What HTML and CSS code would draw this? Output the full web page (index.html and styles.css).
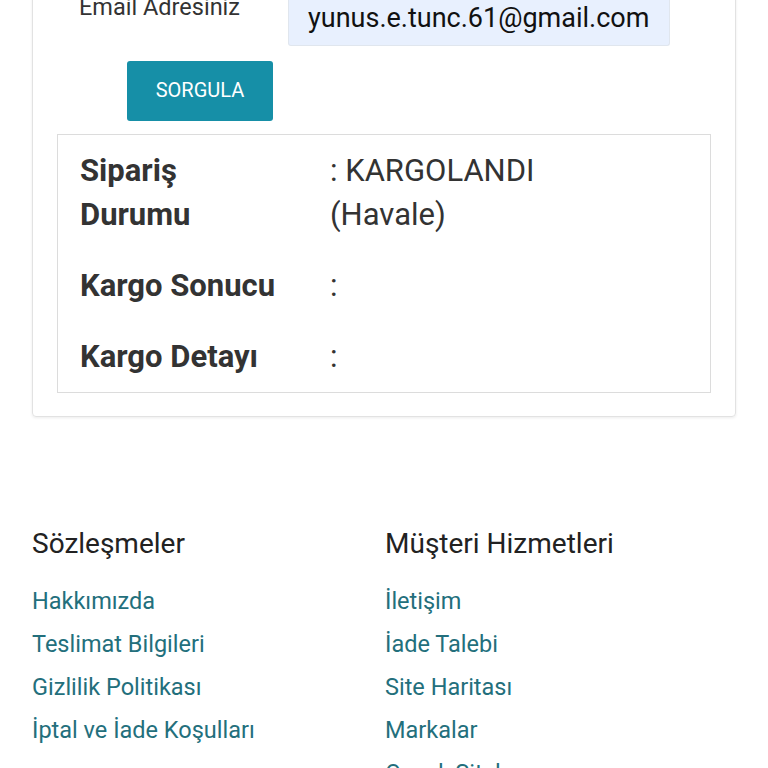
FILE: index.html
```html
<!DOCTYPE html>
<html lang="tr">
<head>
<meta charset="utf-8">
<title>Sipariş Sorgulama</title>
<link rel="stylesheet" href="styles.css">
</head>
<body>
<div class="card">
  <div class="form-row">
    <label class="form-label">Email Adresiniz</label>
    <div class="form-input">yunus.e.tunc.61@gmail.com</div>
  </div>
  <div class="btn-row">
    <button class="btn">SORGULA</button>
  </div>
  <div class="result">
    <div class="result-row">
      <div class="result-label">Sipariş Durumu</div>
      <div class="result-value">: KARGOLANDI<br>(Havale)</div>
    </div>
    <div class="result-row">
      <div class="result-label">Kargo Sonucu</div>
      <div class="result-value">:</div>
    </div>
    <div class="result-row">
      <div class="result-label">Kargo Detayı</div>
      <div class="result-value">:</div>
    </div>
  </div>
</div>
<footer class="footer">
  <div class="footer-col">
    <h3 class="footer-title">Sözleşmeler</h3>
    <ul class="footer-links">
      <li><a href="#">Hakkımızda</a></li>
      <li><a href="#">Teslimat Bilgileri</a></li>
      <li><a href="#">Gizlilik Politikası</a></li>
      <li><a href="#">İptal ve İade Koşulları</a></li>
    </ul>
  </div>
  <div class="footer-col">
    <h3 class="footer-title">Müşteri Hizmetleri</h3>
    <ul class="footer-links">
      <li><a href="#">İletişim</a></li>
      <li><a href="#">İade Talebi</a></li>
      <li><a href="#">Site Haritası</a></li>
      <li><a href="#">Markalar</a></li>
      <li><a href="#">Onaylı Siteler</a></li>
    </ul>
  </div>
</footer>
</body>
</html>
```
FILE: styles.css
```css
html, body {
  margin: 0;
  padding: 0;
  background: #fff;
  font-family: Roboto, "Noto Sans", Arial, sans-serif;
  color: #333;
  overflow: hidden;
}
.card {
  margin: -35px 32px 0;
  border: 1px solid #e2e2e2;
  border-radius: 4px;
  box-shadow: 0 1px 3px rgba(0,0,0,0.08);
  padding: 24px 24px 23px;
}
.form-row {
  display: flex;
  align-items: flex-start;
}
.form-label {
  width: 209px;
  padding-left: 22px;
  padding-top: 3px;
  font-size: 23.5px;
  color: #333;
}
.form-input {
  width: 382px;
  height: 56px;
  padding-left: 19px;
  display: flex;
  align-items: center;
  background: #e8f0fe;
  border: 1px solid #e0e6ee;
  border-top: none;
  border-radius: 0 0 3px 3px;
  font-size: 27px;
  color: #111;
  box-sizing: border-box;
}
.btn-row {
  padding: 15px 0 13px 70px;
}
.btn {
  display: block;
  width: 146px;
  height: 60px;
  border: none;
  border-radius: 3px;
  background: #168fa7;
  color: #fff;
  font-family: Roboto, Arial, sans-serif;
  font-size: 20px;
  padding: 0 0 2px;
}
.result {
  border: 1px solid #dcdcdc;
  padding: 0 22px;
}
.result-row {
  display: grid;
  grid-template-columns: 205px 1fr;
  column-gap: 45px;
  padding: 14px 0 13px;
  line-height: 44px;
  font-size: 31px;
}
.result-label {
  font-weight: 700;
  color: #333;
}
.result-value {
  color: #333;
}
.footer {
  display: grid;
  grid-template-columns: 353px 1fr;
  margin: 111px 32px 0;
}
.footer-title {
  margin: 0;
  font-size: 28px;
  line-height: 32px;
  font-weight: 400;
  color: #222;
}
.footer-links {
  list-style: none;
  margin: 20px 0 0;
  padding: 0;
}
.footer-links li {
  line-height: 43px;
  font-size: 23.5px;
}
.footer-links a {
  color: #236f7c;
  text-decoration: none;
}
```
